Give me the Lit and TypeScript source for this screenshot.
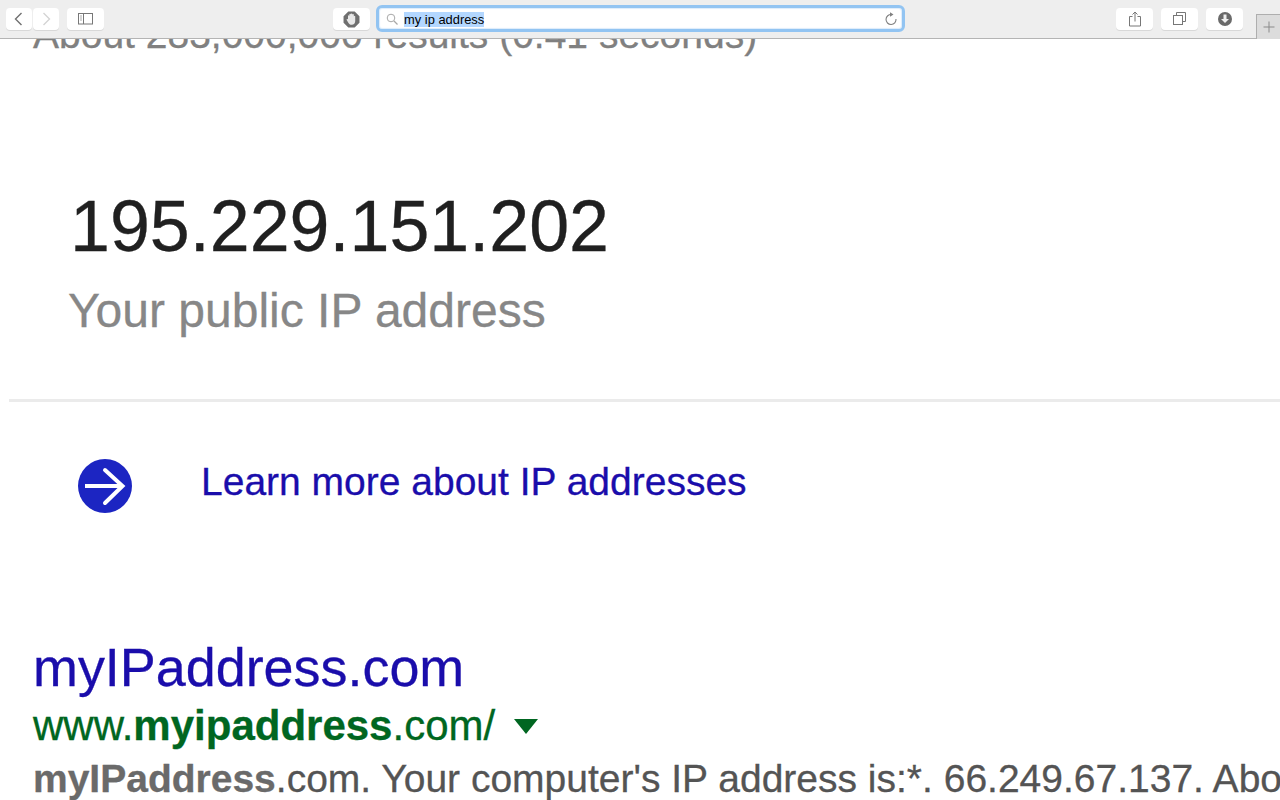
import { LitElement, html, css } from "lit";
import { customElement } from "lit/decorators.js";

@customElement("app-root")
export class AppRoot extends LitElement {
  static styles = css`
    :host { display: block; width: 1280px; height: 800px; overflow: hidden; background: #fff; font-family: "Liberation Sans", Arial, sans-serif; }
    .bar { height: 39px; box-sizing: border-box; background: #eeeeee; border-bottom: 1px solid #b4b4b4; display: flex; align-items: flex-start; padding: 8px 0 0 6px; position: relative; z-index: 2; }
    .btn { width: 37px; height: 22px; background: #fff; border-radius: 4px; box-shadow: 0 1px 0 #d8d8d8; display: flex; align-items: center; justify-content: center; flex: none; }
    .nav { width: 26px; margin-right: 1px; }
    .side { margin-left: 7px; margin-right: 229px; }
    .url { width: 523px; height: 21px; margin: -3px 0 0 6px; background: #fff; border: 3px solid #92c4f2; border-radius: 6px; box-shadow: inset 0 0 1px 1px #dcecfb; display: flex; align-items: center; flex: none; }
    .url .mag { margin-left: 7px; margin-right: 6px; flex: none; }
    .sel { background: #b3d7ff; color: #000; font-size: 12.9px; line-height: 15px; position: relative; top: 1px; }
    .url .reload { margin-left: auto; margin-right: 4px; flex: none; }
    .gap-a { margin-left: 211px; }
    .gap-b { margin-left: 8px; }
    .plus { width: 23px; height: 24px; margin: 6px 0 0 13px; background: #dcdcdc; border-left: 1px solid #aeaeae; border-top: 1px solid #aeaeae; display: flex; align-items: center; justify-content: center; flex: none; }
    .page { height: 761px; overflow: hidden; }
    .inner { margin-top: -26px; -webkit-text-stroke: 0.3px currentColor; }
    .stats { font-size: 39px; line-height: 44px; color: #808080; padding-left: 33px; white-space: nowrap; }
    .ip { font-size: 71.8px; line-height: 84px; color: #202020; padding: 127px 0 0 70px; }
    .lbl { font-size: 48px; line-height: 56px; color: #878787; padding: 0 0 0 68px; margin-top: 15px; }
    .rule { height: 3px; background: #ebebeb; margin: 60px 0 0 9px; }
    .more { display: flex; align-items: flex-start; padding: 57px 0 0 78px; }
    .more a { font-size: 39px; line-height: 44px; color: #1a0dab; margin-left: 68px; margin-top: 1px; white-space: nowrap; }
    .more svg { display: block; flex: none; }
    .title { font-size: 53.9px; line-height: 60px; color: #1a0dab; padding: 123px 0 0 33px; white-space: nowrap; }
    .cite { font-size: 42px; line-height: 46px; color: #006621; padding-left: 33px; margin-top: 6px; white-space: nowrap; display: flex; align-items: center; }
    .cite .arr { width: 0; height: 0; margin: 1px 0 0 19px; border-left: 12px solid transparent; border-right: 12px solid transparent; border-top: 15px solid #006621; }
    .snip { font-size: 39px; line-height: 46px; color: #545454; padding-left: 33px; margin-top: 7px; white-space: nowrap; }
    .snip b { color: #6a6a6a; }
    svg { display: block; }
  `;

  render() {
    return html`
      <div class="bar">
        <div class="btn nav"><svg width="12" height="14" viewBox="0 0 12 14"><path d="M8.5 1 L2.5 7 L8.5 13" fill="none" stroke="#707070" stroke-width="1.4"/></svg></div>
        <div class="btn nav"><svg width="12" height="14" viewBox="0 0 12 14"><path d="M3.5 1 L9.5 7 L3.5 13" fill="none" stroke="#d4d4d4" stroke-width="1.4"/></svg></div>
        <div class="btn side"><svg width="16" height="12" viewBox="0 0 16 12"><rect x=".5" y=".5" width="14" height="10.5" fill="none" stroke="#777"/><path d="M5.5 .5V11" stroke="#777"/><path d="M2 3h2M2 5h2M2 7h2" stroke="#aaa"/></svg></div>
        <div class="btn"><svg width="17" height="17" viewBox="0 0 16 16"><path d="M5 .5h6L15.500 5v6L11 15.500H5L.5 11V5Z" fill="#6f6f6f"/><path d="M4.700 8V4.500a.7.700 0 0 1 1.300 0V3.300a.7.700 0 0 1 1.400 0V3a.7.700 0 0 1 1.400 0v.5a.7.700 0 0 1 1.400 0V5a.7.700 0 0 1 1.300 0v4.500c0 2-1.200 3.500-3.300 3.500-1.700 0-2.500-.8-3.200-2L3.500 8.500c-.4-.8.700-1.400 1.200-.5Z" fill="#e8e8e8"/></svg></div>
        <div class="url">
          <svg class="mag" width="12" height="12" viewBox="0 0 12 12"><circle cx="5" cy="5" r="3.800" fill="none" stroke="#a8a8a8"/><path d="M8 8l3.500 3.500" stroke="#a8a8a8" stroke-width="1.200"/></svg>
          <span class="sel">my ip address</span>
          <svg class="reload" width="14" height="14" viewBox="0 0 14 14"><path d="M7.500 2.500A5 5 0 1 0 12 7" fill="none" stroke="#808080" stroke-width="1.100"/><path d="M6 .2L9.500 2.500L6 4.800Z" fill="#808080"/></svg>
        </div>
        <div class="btn gap-a"><svg width="14" height="16" viewBox="0 0 14 16"><path d="M4.500 5.500H1.500V15H12.500V5.500H9.500" fill="none" stroke="#777"/><path d="M7 1V10.500M4.500 3.500L7 1L9.500 3.500" fill="none" stroke="#777"/></svg></div>
        <div class="btn gap-b"><svg width="14" height="14" viewBox="0 0 14 14"><rect x=".5" y="3.500" width="9" height="9" fill="#fff" stroke="#777"/><path d="M3.500 3.500V.5H12.500V9.500H9.500" fill="none" stroke="#777"/></svg></div>
        <div class="btn gap-b"><svg width="16" height="16" viewBox="0 0 16 16"><circle cx="8" cy="8" r="7" fill="#6a6a6a"/><path d="M6.500 3.500h3V8H12L8 12L4 8h2.500Z" fill="#f0f0f0"/></svg></div>
        <div class="plus"><svg width="12" height="12" viewBox="0 0 12 12"><path d="M6 .5v11M.5 6h11" stroke="#8a8a8a"/></svg></div>
      </div>
      <div class="page"><div class="inner">
        <div class="stats">About 283,000,000 results (0.41 seconds)</div>
        <div class="ip">195.229.151.202</div>
        <div class="lbl">Your public IP address</div>
        <div class="rule"></div>
        <div class="more">
          <svg width="55" height="55" viewBox="0 0 55 55"><circle cx="27" cy="27" r="27" fill="#1c25c2"/><path d="M7 27H44" fill="none" stroke="#fff" stroke-width="4"/><path d="M27 11L44.500 27L27 44" fill="none" stroke="#fff" stroke-width="4" stroke-linecap="round"/></svg>
          <a>Learn more about IP addresses</a>
        </div>
        <div class="title">myIPaddress.com</div>
        <div class="cite"><span>www.<b>myipaddress</b>.com/</span><span class="arr"></span></div>
        <div class="snip"><b>myIPaddress</b>.com. Your computer's IP address is:*. 66.249.67.137. About</div>
      </div></div>
    `;
  }
}
